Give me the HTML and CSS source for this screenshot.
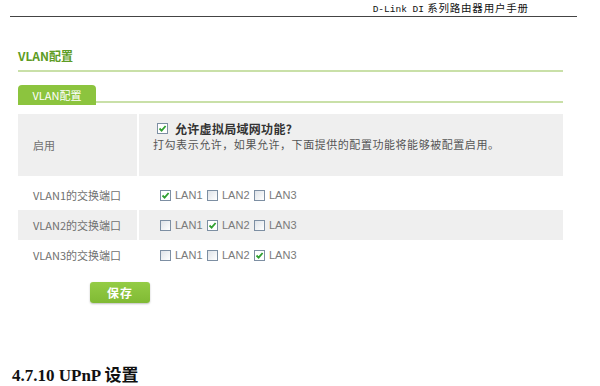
FILE: index.html
```html
<!DOCTYPE html>
<html lang="zh-CN">
<head>
    <meta charset="UTF-8">
    <meta name="viewport" content="width=device-width, initial-scale=1.0">
    <title>VLAN配置</title>
    <link rel="stylesheet" href="styles.css">
</head>
<body>

    <div class="doc-header">
        <span class="doc-brand">D-Link DI</span> 系列路由器用户手册
    </div>

    <div class="panel">
        <h1 class="panel-title">VLAN配置</h1>

        <div class="tabs">
            <span class="tab">VLAN配置</span>
        </div>

        <div class="form-table">
            <div class="row row-enable shaded">
                <div class="cell-label">启用</div>
                <div class="cell-value">
                    <div class="enable-line">
                        <span class="box checked"></span>
                        <strong>允许虚拟局域网功能?</strong>
                    </div>
                    <div class="hint">打勾表示允许，如果允许，下面提供的配置功能将能够被配置启用。</div>
                </div>
            </div>

            <div class="row">
                <div class="cell-label">VLAN1的交换端口</div>
                <div class="cell-value ports">
                    <span class="box checked"></span><span class="port">LAN1</span>
                    <span class="box"></span><span class="port">LAN2</span>
                    <span class="box"></span><span class="port">LAN3</span>
                </div>
            </div>

            <div class="row shaded">
                <div class="cell-label">VLAN2的交换端口</div>
                <div class="cell-value ports">
                    <span class="box"></span><span class="port">LAN1</span>
                    <span class="box checked"></span><span class="port">LAN2</span>
                    <span class="box"></span><span class="port">LAN3</span>
                </div>
            </div>

            <div class="row">
                <div class="cell-label">VLAN3的交换端口</div>
                <div class="cell-value ports">
                    <span class="box"></span><span class="port">LAN1</span>
                    <span class="box"></span><span class="port">LAN2</span>
                    <span class="box checked"></span><span class="port">LAN3</span>
                </div>
            </div>
        </div>

        <button class="save-btn" type="button">保存</button>
    </div>

    <h2 class="section-title">4.7.10 UPnP 设置</h2>

</body>
</html>
```

FILE: styles.css
```css
body {
    margin: 0;
    padding: 0;
    background: #fff;
    font-family: "Noto Sans CJK SC", "Liberation Sans", sans-serif;
    width: 600px;
    height: 386px;
    overflow: hidden;
}

/* en-tete du manuel */
.doc-header {
    margin-left: 10px;
    width: 567px;
    height: 15px;
    padding-top: 1px;
    border-bottom: 1px solid #444;
    text-align: right;
    font-size: 10.5px;
    line-height: 13px;
    letter-spacing: 0.8px;
    color: #111;
}

.doc-header .doc-brand {
    font-family: "Liberation Mono", monospace;
    font-size: 9.5px;
    letter-spacing: 0;
}

.doc-header::after {
    content: "";
    display: inline-block;
    width: 45px;
}

.panel {
    margin-left: 18px;
    width: 545px;
    padding-top: 31px;
}

.panel-title {
    margin: 0;
    height: 24px;
    line-height: 16px;
    font-size: 12px;
    font-weight: bold;
    color: #5d9c25;
    border-bottom: 2px solid #c9e0a8;
    box-sizing: border-box;
}

.tabs {
    margin-top: 9px;
    height: 22px;
    border-bottom: 2px solid #c9e0a8;
    box-sizing: border-box;
}

.tab {
    display: inline-block;
    width: 78px;
    height: 20px;
    line-height: 20px;
    text-align: center;
    background: #8cc43e;
    color: #fff;
    font-size: 11px;
    border-radius: 4px 4px 0 0;
}

.form-table {
    margin-top: 11px;
}

.row {
    display: grid;
    grid-template-columns: 119px 1fr;
    column-gap: 2px;
    height: 30px;
    font-size: 11px;
    color: #707070;
}

.row-enable {
    height: 62px;
    margin-bottom: 4px;
}

.row.shaded .cell-label,
.row.shaded .cell-value {
    background: #efefef;
}

.cell-label {
    padding-left: 15px;
    display: flex;
    align-items: center;
}

.cell-value {
    padding-left: 14px;
}

.row-enable .cell-value {
    padding-top: 6px;
}

.enable-line {
    display: flex;
    align-items: center;
    gap: 7px;
    height: 16px;
    padding-left: 4px;
}

.enable-line strong {
    font-size: 12px;
    color: #333;
    letter-spacing: 0.3px;
}

.hint {
    height: 16px;
    line-height: 16px;
    font-size: 11px;
    letter-spacing: 0.55px;
    color: #555;
}

.ports {
    display: flex;
    align-items: center;
    padding-left: 21px;
}

.port {
    margin-left: 4px;
    margin-right: 4px;
    width: 28px;
    color: #7a7a7a;
    font-family: "Liberation Sans", sans-serif;
    font-size: 11px;
}

/* case a cocher */
.box {
    display: inline-block;
    width: 11px;
    height: 11px;
    box-sizing: border-box;
    border: 1px solid #7d8fa3;
    background: linear-gradient(135deg, #dfe3e8, #fff);
    flex-shrink: 0;
}

.box.checked {
    background-color: #fff;
    background-image: url("data:image/svg+xml;utf8,<svg xmlns='http://www.w3.org/2000/svg' viewBox='0 0 9 9'><path d='M1.5 4.5 L3.6 6.6 L7.6 2' fill='none' stroke='%2330a030' stroke-width='1.8'/></svg>");
    background-size: 9px 9px;
    background-repeat: no-repeat;
}

.save-btn {
    display: block;
    margin-top: 12px;
    margin-left: 72px;
    width: 60px;
    height: 21px;
    padding: 0;
    border: none;
    border-radius: 3px;
    background: linear-gradient(#94cc45, #80ba34);
    box-shadow: 0 1px 2px rgba(0, 0, 0, 0.25);
    color: #fff;
    font-family: "Noto Sans CJK SC", sans-serif;
    font-size: 12px;
    font-weight: bold;
    letter-spacing: 1px;
}

.section-title {
    margin: 0;
    margin-top: 63px;
    margin-left: 12px;
    font-family: "Liberation Serif", "Noto Sans CJK SC", serif;
    font-size: 17px;
    font-weight: bold;
    color: #111;
    line-height: 20px;
}
```
